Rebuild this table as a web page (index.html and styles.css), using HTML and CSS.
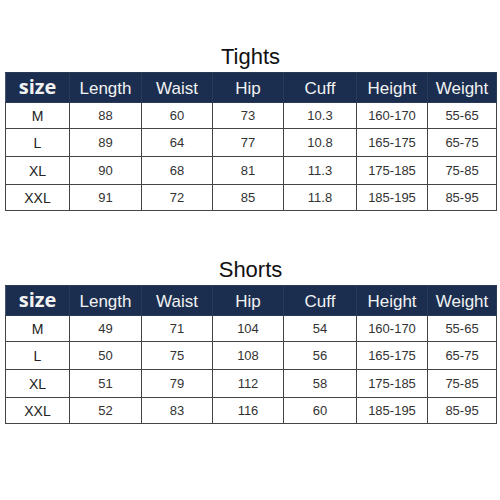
FILE: index.html
```html
<!DOCTYPE html>
<html>
<head>
<meta charset="utf-8">
<link rel="stylesheet" href="styles.css">
</head>
<body>
<div class="page">
  <section class="chart chart-tights">
    <h2 class="title">Tights</h2>
    <table class="sizes">
      <colgroup>
        <col class="c1"><col class="c2"><col class="c3"><col class="c4"><col class="c5"><col class="c6"><col class="c7">
      </colgroup>
      <thead>
        <tr><th class="size">size</th><th>Length</th><th>Waist</th><th>Hip</th><th>Cuff</th><th>Height</th><th>Weight</th></tr>
      </thead>
      <tbody>
        <tr class="r1"><td class="lbl">M</td><td>88</td><td>60</td><td>73</td><td>10.3</td><td>160-170</td><td>55-65</td></tr>
        <tr class="r2"><td class="lbl">L</td><td>89</td><td>64</td><td>77</td><td>10.8</td><td>165-175</td><td>65-75</td></tr>
        <tr class="r3"><td class="lbl">XL</td><td>90</td><td>68</td><td>81</td><td>11.3</td><td>175-185</td><td>75-85</td></tr>
        <tr class="r4"><td class="lbl">XXL</td><td>91</td><td>72</td><td>85</td><td>11.8</td><td>185-195</td><td>85-95</td></tr>
      </tbody>
    </table>
  </section>
  <section class="chart chart-shorts">
    <h2 class="title">Shorts</h2>
    <table class="sizes">
      <colgroup>
        <col class="c1"><col class="c2"><col class="c3"><col class="c4"><col class="c5"><col class="c6"><col class="c7">
      </colgroup>
      <thead>
        <tr><th class="size">size</th><th>Length</th><th>Waist</th><th>Hip</th><th>Cuff</th><th>Height</th><th>Weight</th></tr>
      </thead>
      <tbody>
        <tr class="r1"><td class="lbl">M</td><td>49</td><td>71</td><td>104</td><td>54</td><td>160-170</td><td>55-65</td></tr>
        <tr class="r2"><td class="lbl">L</td><td>50</td><td>75</td><td>108</td><td>56</td><td>165-175</td><td>65-75</td></tr>
        <tr class="r3"><td class="lbl">XL</td><td>51</td><td>79</td><td>112</td><td>58</td><td>175-185</td><td>75-85</td></tr>
        <tr class="r4"><td class="lbl">XXL</td><td>52</td><td>83</td><td>116</td><td>60</td><td>185-195</td><td>85-95</td></tr>
      </tbody>
    </table>
  </section>
</div>
</body>
</html>
```

FILE: styles.css
```css
html, body {
  margin: 0;
  padding: 0;
  background: #ffffff;
}
body {
  font-family: "Liberation Sans", Arial, sans-serif;
  color: #222;
}
.page {
  width: 500px;
  height: 500px;
  padding: 42px 0 0 5px;
  box-sizing: border-box;
}
.chart-shorts {
  margin-top: 44px;
}
.title {
  margin: 0;
  height: 30px;
  font-size: 22px;
  font-weight: normal;
  line-height: 30px;
  text-align: center;
  color: #111;
  padding-right: 4px;
}
.sizes {
  border-collapse: collapse;
  table-layout: fixed;
  width: 491px;
}
.c1 { width: 64px; }
.c2 { width: 72px; }
.c3 { width: 71px; }
.c4 { width: 71px; }
.c5 { width: 73px; }
.c6 { width: 71px; }
.c7 { width: 69px; }
.sizes th {
  background: #1b2e4f;
  color: #f2f2f2;
  font-weight: normal;
  font-size: 17px;
  height: 26px;
  padding: 2px 0 0;
  border: 1px solid #2a3a55;
  border-left-color: #4a5670;
  text-align: center;
}
.sizes th.size {
  font-family: "Open Sans", "Liberation Sans", sans-serif;
  font-weight: bold;
  font-size: 20px;
  padding: 0 0 2px;
}
.sizes td {
  border: 1px solid #444;
  padding: 0;
  height: 26px;
  text-align: center;
  font-size: 13px;
  color: #333;
}
.sizes td.lbl {
  font-size: 14px;
  color: #222;
}
.sizes tr.r2 td,
.sizes tr.r3 td {
  height: 27px;
}
.sizes tr.r1 td,
.sizes tr.r4 td {
  height: 25px;
}
```
